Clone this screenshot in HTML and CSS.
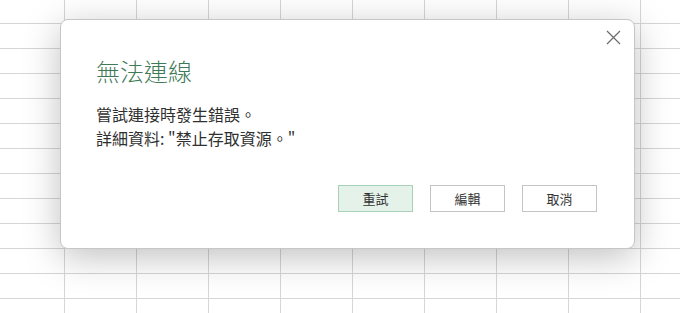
FILE: index.html
```html
<!DOCTYPE html>
<html lang="zh-Hant">
<head>
<meta charset="utf-8">
<link rel="stylesheet" href="styles.css">
</head>
<body>
<div class="sheet"></div>
<div class="dialog" role="dialog">
  <button class="close" aria-label="關閉">
    <svg width="15" height="15" viewBox="0 0 15 15"><path d="M1 1 L14 14 M14 1 L1 14" stroke="#6b6b6b" stroke-width="1.2" fill="none"/></svg>
  </button>
  <h1 class="title">無法連線</h1>
  <div class="message">
    <p>嘗試連接時發生錯誤。</p>
    <p>詳細資料: "禁止存取資源。"</p>
  </div>
  <div class="actions">
    <button class="btn primary">重試</button>
    <button class="btn">編輯</button>
    <button class="btn">取消</button>
  </div>
</div>
</body>
</html>
```
FILE: styles.css
```css
html, body {
  margin: 0;
  padding: 0;
  width: 680px;
  height: 313px;
  overflow: hidden;
}
body {
  position: relative;
  font-family: "Noto Sans CJK TC", "Noto Sans", sans-serif;
  background: #fff;
}
.sheet {
  width: 680px;
  height: 313px;
  background-color: #fff;
  background-image:
    linear-gradient(to right, transparent 64px, #d6d6d6 64px, #d6d6d6 65px, transparent 65px),
    linear-gradient(to bottom, transparent 23px, #d6d6d6 23px, #d6d6d6 24px, transparent 24px);
  background-size: 72px 100%, 100% 25px;
  background-repeat: repeat-x, repeat-y;
}
.dialog {
  position: absolute;
  left: 60px;
  top: 19px;
  width: 575px;
  height: 230px;
  box-sizing: border-box;
  background: #fff;
  border: 1px solid #c6c6c6;
  border-radius: 8px;
  box-shadow: 0 8px 36px rgba(0, 0, 0, 0.25);
  padding: 35px 37px 36px 35px;
  display: flex;
  flex-direction: column;
}
.close {
  position: absolute;
  top: 5px;
  right: 9px;
  width: 24px;
  height: 24px;
  padding: 0;
  border: none;
  background: transparent;
  display: flex;
  align-items: center;
  justify-content: center;
}
.title {
  margin: 0;
  font-size: 24px;
  line-height: 32px;
  font-weight: 300;
  color: #3f7a57;
}
.message {
  margin-top: 15px;
  font-size: 16px;
  line-height: 24px;
  color: #303030;
}
.message p {
  margin: 0;
}
.actions {
  margin-top: auto;
  display: flex;
  justify-content: flex-end;
  gap: 17px;
}
.btn {
  width: 75px;
  height: 27px;
  box-sizing: border-box;
  border: 1px solid #c4c4c4;
  background: #fff;
  font-family: "Noto Sans CJK TC", sans-serif;
  font-size: 13px;
  color: #333;
  padding: 0;
}
.btn.primary {
  background: #e5f2ea;
  border-color: #a9d1b8;
}
```
